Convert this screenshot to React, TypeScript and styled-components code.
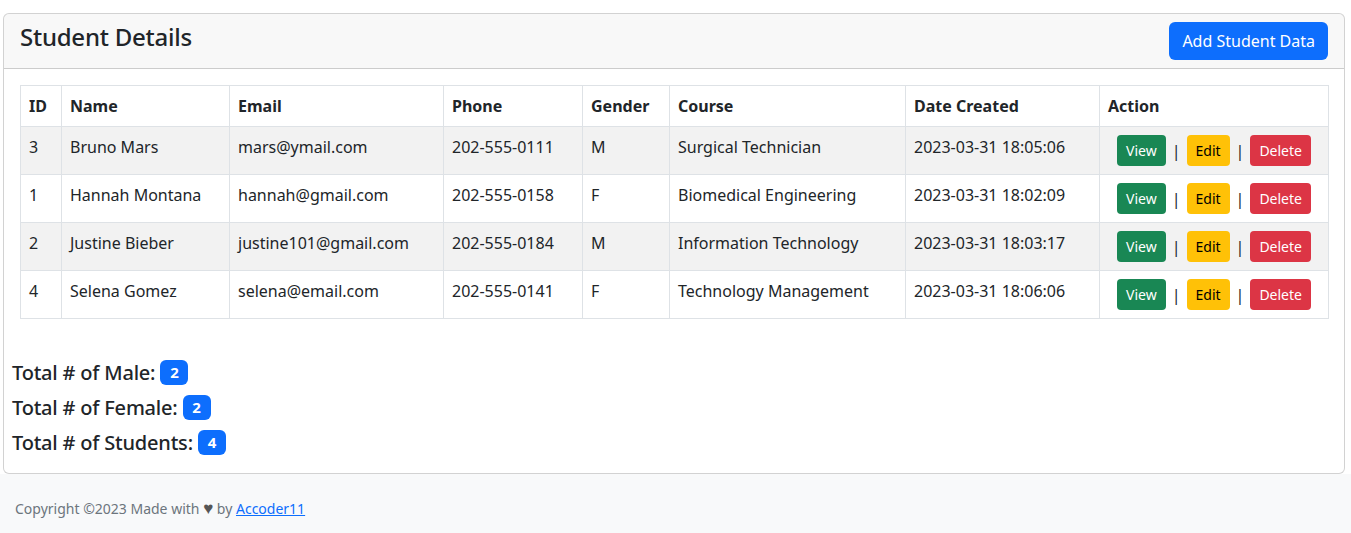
import React from "react";
import styled, { createGlobalStyle } from "styled-components";

const GlobalStyle = createGlobalStyle`
  html, body { margin: 0; padding: 0; background: #fff; }
  body {
    font-family: "Noto Sans", "Open Sans", sans-serif;
    font-size: 16px;
    line-height: 1.5;
    color: #212529;
  }
  * { box-sizing: border-box; }
`;

const Page = styled.div`
  display: flex;
  flex-direction: column;
  min-height: 533px;
`;

const Main = styled.main`
  padding: 13px 6px 0 3px;
  background: #fff;
`;

const Card = styled.section`
  border: 1px solid rgba(0, 0, 0, 0.175);
  border-radius: 6px;
  background: #fff;
  overflow: hidden;
`;

const CardHeader = styled.header`
  display: flex;
  justify-content: space-between;
  align-items: flex-start;
  padding: 8px 16px;
  background: rgba(33, 37, 41, 0.03);
  border-bottom: 1px solid rgba(0, 0, 0, 0.175);
`;

const Title = styled.h4`
  margin: 1px 0 0;
  font-size: 24px;
  font-weight: 500;
  line-height: 1.2;
  letter-spacing: -0.01em;
`;

const Button = styled.button<{ $variant: "primary" | "success" | "warning" | "danger"; $small?: boolean }>`
  display: inline-block;
  font-family: inherit;
  border: 1px solid transparent;
  cursor: pointer;
  line-height: 1.5;
  font-size: ${(p) => (p.$small ? "14px" : "16px")};
  padding: ${(p) => (p.$small ? "4px 8px" : "6px 12px")};
  border-radius: ${(p) => (p.$small ? "4px" : "6px")};
  background: ${(p) =>
    ({ primary: "#0d6efd", success: "#198754", warning: "#ffc107", danger: "#dc3545" }[p.$variant])};
  color: ${(p) => (p.$variant === "warning" ? "#000" : "#fff")};
  vertical-align: middle;
`;

const CardBody = styled.div`
  padding: 16px;
`;

const Table = styled.table`
  width: 100%;
  border-collapse: collapse;
  table-layout: fixed;
`;

const Th = styled.th`
  text-align: left;
  vertical-align: top;
  font-weight: 700;
  padding: 8px;
  border: 1px solid #dee2e6;
  line-height: 24px;
`;

const Tr = styled.tr<{ $striped: boolean }>`
  background: ${(p) => (p.$striped ? "#f2f2f2" : "#fff")};
`;

const Td = styled.td<{ $center?: boolean }>`
  padding: 8px;
  border: 1px solid #dee2e6;
  line-height: 24px;
  vertical-align: top;
  text-align: ${(p) => (p.$center ? "center" : "left")};
  white-space: nowrap;
`;

const Actions = styled.div`
  display: flex;
  justify-content: center;
  align-items: center;
  line-height: 31px;
`;

const Sep = styled.span`
  margin: 0 6px;
  line-height: 24px;
  color: #212529;
`;

const Totals = styled.div`
  padding: 24px 8px 17px;
  display: flex;
  flex-direction: column;
  gap: 8px;
`;

const TotalLine = styled.h5`
  margin: 0;
  font-size: 20px;
  font-weight: 500;
  line-height: 27px;
  letter-spacing: -0.01em;
`;

const Badge = styled.span`
  display: inline-block;
  background: #0d6efd;
  color: #fff;
  font-size: 15px;
  font-weight: 700;
  line-height: 1;
  padding: 5px 9.75px;
  border-radius: 6px;
  vertical-align: 2px;
  letter-spacing: 0;
`;

const Footer = styled.footer`
  flex: 1;
  background: #f8f9fa;
  padding: 24px 15px;
  font-size: 14px;
  line-height: 21px;
  color: #6c757d;
`;

const Heart = styled.span`
  font-size: 17px;
  color: #555;
  line-height: 1;
`;

const Link = styled.a`
  color: #0d6efd;
  text-decoration: underline;
`;

const columns: { label: string; width: number }[] = [
  { label: "ID", width: 41 },
  { label: "Name", width: 168 },
  { label: "Email", width: 214 },
  { label: "Phone", width: 139 },
  { label: "Gender", width: 87 },
  { label: "Course", width: 236 },
  { label: "Date Created", width: 194 },
  { label: "Action", width: 229 },
];

const students = [
  { id: 3, name: "Bruno Mars", email: "mars@ymail.com", phone: "202-555-0111", gender: "M", course: "Surgical Technician", date: "2023-03-31 18:05:06" },
  { id: 1, name: "Hannah Montana", email: "hannah@gmail.com", phone: "202-555-0158", gender: "F", course: "Biomedical Engineering", date: "2023-03-31 18:02:09" },
  { id: 2, name: "Justine Bieber", email: "justine101@gmail.com", phone: "202-555-0184", gender: "M", course: "Information Technology", date: "2023-03-31 18:03:17" },
  { id: 4, name: "Selena Gomez", email: "selena@email.com", phone: "202-555-0141", gender: "F", course: "Technology Management", date: "2023-03-31 18:06:06" },
];

export default function App() {
  const male = students.filter((s) => s.gender === "M").length;
  const female = students.filter((s) => s.gender === "F").length;
  return (
    <Page>
      <GlobalStyle />
      <Main>
        <Card>
          <CardHeader>
            <Title>Student Details</Title>
            <Button $variant="primary">Add Student Data</Button>
          </CardHeader>
          <CardBody>
            <Table>
              <colgroup>
                {columns.map((c) => (
                  <col key={c.label} style={{ width: c.width }} />
                ))}
              </colgroup>
              <thead>
                <tr>
                  {columns.map((c) => (
                    <Th key={c.label}>{c.label}</Th>
                  ))}
                </tr>
              </thead>
              <tbody>
                {students.map((s, i) => (
                  <Tr key={s.id} $striped={i % 2 === 0}>
                    <Td>{s.id}</Td>
                    <Td>{s.name}</Td>
                    <Td>{s.email}</Td>
                    <Td>{s.phone}</Td>
                    <Td>{s.gender}</Td>
                    <Td>{s.course}</Td>
                    <Td>{s.date}</Td>
                    <Td $center>
                      <Actions>
                        <Button $variant="success" $small>View</Button>
                        <Sep>|</Sep>
                        <Button $variant="warning" $small>Edit</Button>
                        <Sep>|</Sep>
                        <Button $variant="danger" $small>Delete</Button>
                      </Actions>
                    </Td>
                  </Tr>
                ))}
              </tbody>
            </Table>
          </CardBody>
          <Totals>
            <TotalLine>
              Total # of Male: <Badge>{male}</Badge>
            </TotalLine>
            <TotalLine>
              Total # of Female: <Badge>{female}</Badge>
            </TotalLine>
            <TotalLine>
              Total # of Students: <Badge>{students.length}</Badge>
            </TotalLine>
          </Totals>
        </Card>
      </Main>
      <Footer>
        Copyright ©2023 Made with <Heart>♥</Heart> by <Link href="#">Accoder11</Link>
      </Footer>
    </Page>
  );
}
